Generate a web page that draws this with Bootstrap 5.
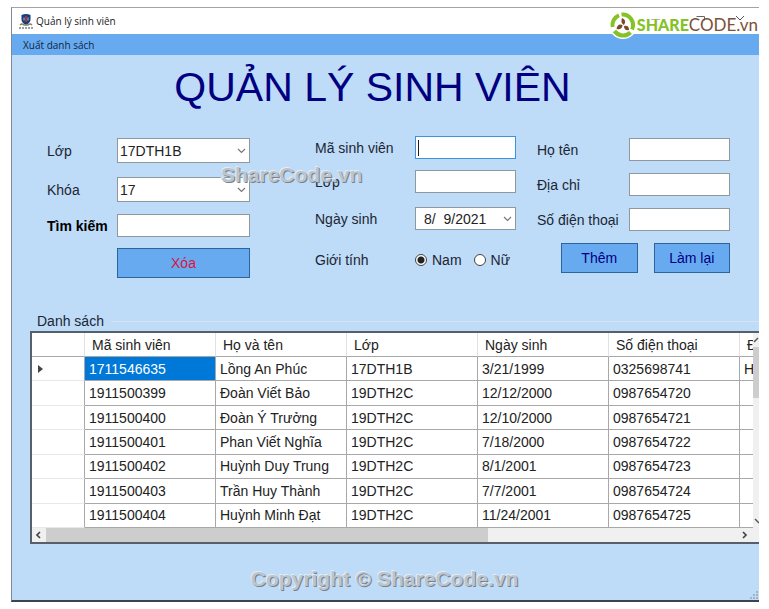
<!DOCTYPE html>
<html lang="vi">
<head>
<meta charset="utf-8">
<meta name="viewport" content="width=device-width, initial-scale=1">
<title>Quản lý sinh viên</title>
<link href="https://cdn.jsdelivr.net/npm/bootstrap@5.3.0/dist/css/bootstrap.min.css" rel="stylesheet">
<style>
body{background:#fff;font-family:"Liberation Sans",Arial,sans-serif;font-size:14px;line-height:20px;color:#1c2633}
.app-window{margin:7px 10px 0 11px;border-top:1px solid #a3a3a3;border-left:1px solid #7d8996;border-bottom:2px solid #3c4350;background:#bedbf8;overflow:hidden}
.title-bar{height:26px;padding:0 8px 0 7px;background:#fff;font-family:"Open Sans","Noto Sans",sans-serif;font-size:10px;color:#222}
.title-bar span{margin-left:3px}
.win-btn{border:0;padding:0;background:none;line-height:0}
.menu-strip{height:21px;background:#67aaf0;font-family:"Open Sans","Noto Sans",sans-serif;font-size:10px}
.menu-strip a{color:#12263f;padding:0 11px}
.page-title{font-size:41px;line-height:48px;color:#000080;padding:8px 26px 0 0}
.form-grid{display:grid;grid-template-columns:268fr 222fr 193fr;padding:25px 29px 0 35px}
.group-a{padding:2px 65px 0 0}
.group-b{padding-right:21px}
.group-c{padding-top:2px}
.line{display:grid;align-items:center}
.group-a .line{grid-template-columns:70px 1fr}
.group-b .line{grid-template-columns:100px 1fr}
.group-c .line{grid-template-columns:92px 1fr}
.gap-below-s{margin-bottom:11px}
.gap-below-m{margin-bottom:12px}
.gap-below-l{margin-bottom:14px}
.box{width:100%;min-width:0;height:23px;border:1px solid #8f989f;border-radius:0;background-color:#fff;padding:0 3px;font-size:14px;color:#222;appearance:none;outline:0}
.box-tall{height:25px;padding:0 2px}
.box-drop{background-image:url("data:image/svg+xml,%3Csvg xmlns='http://www.w3.org/2000/svg' width='9' height='6'%3E%3Cpath d='M1 1l3.5 3.5L8 1' fill='none' stroke='%23777' stroke-width='1.2'/%3E%3C/svg%3E");background-repeat:no-repeat;background-position:right 3px center}
.box-date{padding-left:8px}
.box-active{border-color:#3c94e0;background-image:linear-gradient(#222,#222);background-size:1px 16px;background-position:2px center;background-repeat:no-repeat}
.cmd{height:30px;padding:0;border:1px solid #2d6499;border-radius:0;background:#67aaf0;color:#000080;font-size:14px;line-height:20px}
.cmd:hover{background:#5a9fe8}
.cmd-red{color:#dc143c}
.pick{appearance:none;width:12px;height:12px;border:1px solid #444;border-radius:50%;background:#fff;margin:0 5px 0 0}
.pick:checked{background:radial-gradient(#222 0 3px,#fff 4px)}
.list-box{margin:33px 0 0 18px}
.list-box legend{float:none;font-size:14px;line-height:20px;width:auto;margin:0;padding:0 7px}
.rule{height:1px;background:#d3e3f2}
.grid-frame{border:2px solid #56606b;border-width:2px 0 2px 2px;background:#fff}
.grid-view{table-layout:fixed;width:100%;height:195px;border-collapse:separate;border-spacing:0;background:#fff;color:#222}
.grid-view th,.grid-view td{height:24px;padding:0 3px 0 4px;border-right:1px solid #a8a8a8;border-bottom:1px solid #a8a8a8;white-space:nowrap;overflow:hidden;line-height:20px;font-weight:400}
.grid-view thead th{padding-left:7px;border-right-color:#e2e2e2}
.grid-view tbody th{border-bottom-color:#e8e8e8;padding-left:6px;line-height:0}
.grid-view tr>:last-child{border-right:0}
.grid-view .picked{background:#0078d7;color:#fff}
.col-head{width:53px}
.col-data{width:131px}
.bar-v{width:6px;background:#f0f0f0}
.bar-v .thumb{height:51px;background:#cdcdcd}
.bar-h{height:14px;background:#f0f0f0}
.bar-h .thumb{width:64%;background:#cdcdcd}
.arrow{border:0;padding:0;width:14px;height:14px;background:none;line-height:0;flex:none}
.arrow-v{width:6px;overflow:hidden}
.foot{height:56px}
.stamp{position:absolute;font-size:21px;line-height:24px;font-weight:700;color:#bcc4cc;text-shadow:1px 1px 0 #78828e,-1px -1px 0 #e4ecf4;white-space:nowrap;pointer-events:none}
.stamp-top{left:221px;top:163px}
.stamp-bottom{left:0;right:0;top:567px;text-align:center}
.brand{position:absolute;right:11px;top:11px;font-family:Lato,sans-serif;font-size:17px;line-height:28px;color:#7a5136;text-decoration:none}
.brand strong{color:#84c225;font-size:16px;font-weight:900}
</style>
<script src="https://cdn.jsdelivr.net/npm/bootstrap@5.3.0/dist/js/bootstrap.bundle.min.js" defer></script>
</head>
<body class="position-relative">
<main class="app-window">
  <header class="title-bar d-flex align-items-center">
    <svg width="14" height="15" viewBox="0 0 14 15" aria-hidden="true"><path d="M2.500 1Q7-1 11.500 1V6Q11 9 7 11Q3 9 2.500 6Z" fill="#173f78"/><path d="M7 2v6" stroke="#c33" stroke-width="1.500"/><path d="M5 3.500v3M9 3.500v3" stroke="#9bc4e8"/><path d="M1 11q2-2 4 0h4q2-2 4 0" fill="none" stroke="#8a8067" stroke-width="1.500"/><path d="M0 14h14" stroke="#345" stroke-dasharray="2 1"/></svg>
    <span>Quản lý sinh viên</span>
    <button class="win-btn ms-auto me-4" aria-label="Thu nhỏ"><svg width="18" height="10"><path d="M2 3.500h9" stroke="#bbb" fill="none"/></svg></button>
    <button class="win-btn me-4" aria-label="Phóng to"><svg width="18" height="12"><path d="M5.500 1.500h8v4" stroke="#666" fill="none"/></svg></button>
    <button class="win-btn" aria-label="Đóng"><svg width="18" height="12"><path d="M3 1l4 4l4-4" stroke="#555" fill="none"/></svg></button>
  </header>
  <nav class="menu-strip d-flex align-items-center"><a class="text-decoration-none" href="#">Xuất danh sách</a></nav>
  <h1 class="page-title text-center m-0 fw-normal">QUẢN LÝ SINH VIÊN</h1>

  <form class="form-grid">
    <div class="group-a d-flex flex-column">
      <div class="line gap-below-l"><label for="cls">Lớp</label><select id="cls" class="box box-tall box-drop"><option>17DTH1B</option></select></div>
      <div class="line gap-below-m"><label for="year">Khóa</label><select id="year" class="box box-tall box-drop"><option>17</option></select></div>
      <div class="line gap-below-s"><label for="find" class="fw-bold text-black text-nowrap">Tìm kiếm</label><input id="find" class="box" type="text"></div>
      <div class="line"><span></span><button type="button" class="btn cmd cmd-red">Xóa</button></div>
    </div>
    <div class="group-b d-flex flex-column">
      <div class="line gap-below-s"><label for="code">Mã sinh viên</label><input id="code" class="box box-active" type="text"></div>
      <div class="line gap-below-l"><label for="cls2">Lớp</label><input id="cls2" class="box" type="text"></div>
      <div class="line"><label for="born">Ngày sinh</label><input id="born" class="box box-drop box-date" type="text" value="8/  9/2021"></div>
      <div class="line mt-3 pt-1" role="radiogroup" aria-labelledby="sex"><span id="sex">Giới tính</span>
        <div class="d-flex text-nowrap gap-2">
          <label class="d-flex align-items-center"><input class="pick" type="radio" name="sex" checked>Nam</label>
          <label class="d-flex align-items-center ms-1"><input class="pick" type="radio" name="sex">Nữ</label>
        </div></div>
    </div>
    <div class="group-c d-flex flex-column">
      <div class="line gap-below-m"><label for="name">Họ tên</label><input id="name" class="box" type="text"></div>
      <div class="line gap-below-m"><label for="addr">Địa chỉ</label><input id="addr" class="box" type="text"></div>
      <div class="line gap-below-m"><label for="tel">Số điện thoại</label><input id="tel" class="box" type="text"></div>
      <div class="d-flex ms-4"><button type="button" class="btn cmd flex-fill w-50 me-3">Thêm</button><button type="button" class="btn cmd flex-fill w-50">Làm lại</button></div>
    </div>
  </form>

  <fieldset class="list-box">
    <div class="d-flex align-items-center"><legend>Danh sách</legend><div class="rule flex-fill"></div></div>
    <div class="grid-frame">
      <div class="d-flex">
        <div class="flex-fill overflow-hidden">
          <table class="grid-view">
            <colgroup><col class="col-head"><col class="col-data"><col class="col-data"><col class="col-data"><col class="col-data"><col class="col-data"><col></colgroup>
            <thead><tr><th></th><th>Mã sinh viên</th><th>Họ và tên</th><th>Lớp</th><th>Ngày sinh</th><th>Số điện thoại</th><th>Địa chỉ</th></tr></thead>
            <tbody>
              <tr><th><svg width="6" height="8"><path d="M0 0l5 4-5 4z" fill="#444"/></svg></th><td class="picked">1711546635</td><td>Lồng An Phúc</td><td>17DTH1B</td><td>3/21/1999</td><td>0325698741</td><td>H</td></tr>
              <tr><th></th><td>1911500399</td><td>Đoàn Viết Bảo</td><td>19DTH2C</td><td>12/12/2000</td><td>0987654720</td><td></td></tr>
              <tr><th></th><td>1911500400</td><td>Đoàn Ý Trưởng</td><td>19DTH2C</td><td>12/10/2000</td><td>0987654721</td><td></td></tr>
              <tr><th></th><td>1911500401</td><td>Phan Viết Nghĩa</td><td>19DTH2C</td><td>7/18/2000</td><td>0987654722</td><td></td></tr>
              <tr><th></th><td>1911500402</td><td>Huỳnh Duy Trung</td><td>19DTH2C</td><td>8/1/2001</td><td>0987654723</td><td></td></tr>
              <tr><th></th><td>1911500403</td><td>Trần Huy Thành</td><td>19DTH2C</td><td>7/7/2001</td><td>0987654724</td><td></td></tr>
              <tr><th></th><td>1911500404</td><td>Huỳnh Minh Đạt</td><td>19DTH2C</td><td>11/24/2001</td><td>0987654725</td><td></td></tr>
            </tbody>
          </table>
        </div>
        <div class="bar-v d-flex flex-column justify-content-between">
          <div><button class="arrow arrow-v d-block" aria-label="Lên"><svg width="6" height="14"><path d="M1 9l4-4" stroke="#555" stroke-width="1.500"/></svg></button><div class="thumb"></div></div>
          <button class="arrow arrow-v d-block" aria-label="Xuống"><svg width="6" height="14"><path d="M2 5l4 4" stroke="#555" stroke-width="1.500"/></svg></button>
        </div>
      </div>
      <div class="bar-h d-flex">
        <button class="arrow" aria-label="Trái"><svg width="14" height="14"><path d="M8 4L5 7l3 3" fill="none" stroke="#444" stroke-width="1.700"/></svg></button>
        <div class="flex-fill d-flex"><div class="thumb"></div></div>
        <button class="arrow me-2" aria-label="Phải"><svg width="14" height="14"><path d="M6 4l3 3-3 3" fill="none" stroke="#444" stroke-width="1.700"/></svg></button>
      </div>
    </div>
  </fieldset>
  <div class="foot d-flex align-items-end justify-content-end"><svg width="9" height="9" aria-hidden="true"><path d="M6 1h2M3 4h2M6 4h2M0 7h2M3 7h2M6 7h2" stroke="#a3b3c4" stroke-width="2"/></svg></div>
</main>

<a class="brand d-flex align-items-center" href="#">
  <svg width="28" height="28" viewBox="0 0 28 28" aria-hidden="true"><circle cx="14" cy="14" r="14" fill="#fff"/><g fill="none" stroke="#84c225" stroke-width="4"><path d="M3.600 16A10.500 10.500 0 0 1 10 4.300"/><path d="M12.500 3.600A10.500 10.500 0 0 1 23 18.500"/><path d="M21.500 21.500A10.500 10.500 0 0 1 5.500 20"/></g><g fill="#7a4a2a"><path d="M13 7q5 2 2 7q-4-2-2-7Z"/><path d="M7.500 18q1-6 6-4q0 5-6 4Z"/><path d="M15 15q5-1 5 4q-5 1-5-4Z"/></g></svg>
  <strong>SHARE</strong><span>CODE.vn</span>
</a>
<div class="stamp stamp-top">ShareCode.vn</div>
<div class="stamp stamp-bottom">Copyright © ShareCode.vn</div>
</body>
</html>
